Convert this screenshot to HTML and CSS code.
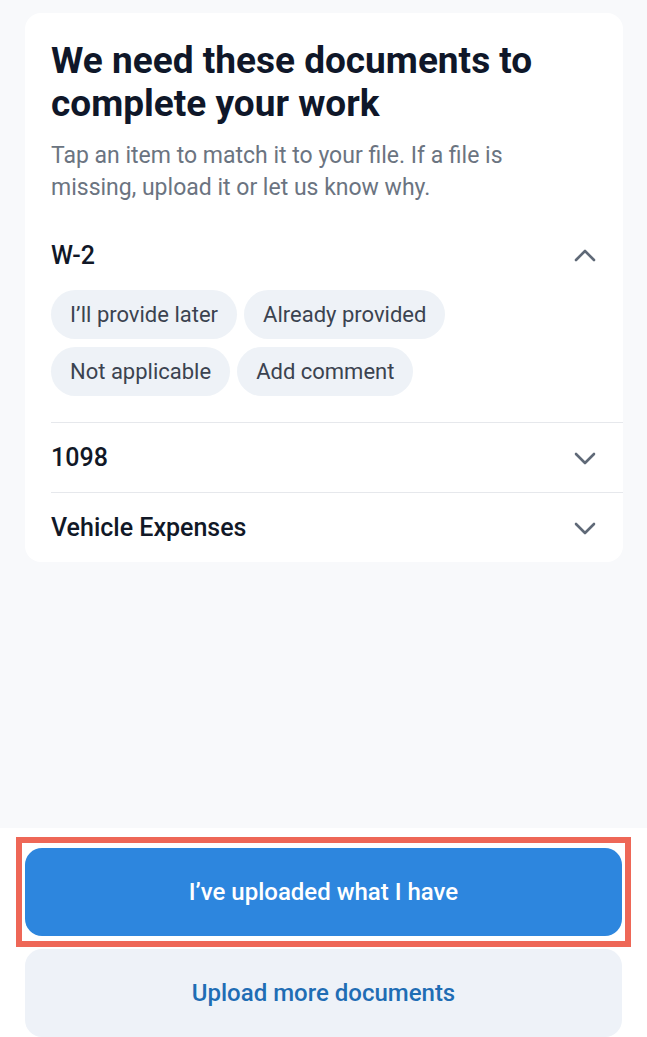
FILE: index.html
```html
<!DOCTYPE html>
<html lang="en">
<head>
    <meta charset="UTF-8">
    <meta name="viewport" content="width=device-width, initial-scale=1.0">
    <title>Documents needed</title>
    <link rel="stylesheet" href="styles.css">
</head>
<body>
    <div class="screen">
        <main class="content">
            <section class="card">
                <div class="intro">
                    <h1>We need these documents to complete your work</h1>
                    <p>Tap an item to match it to your file. If a file is missing, upload it or let us know why.</p>
                </div>

                <div class="doc doc-first">
                    <div class="doc-head">
                        <span class="doc-title">W-2</span>
                        <svg class="chevron" viewBox="0 0 22 22" width="22" height="22"><path d="M2 15l9-9 9 9"/></svg>
                    </div>
                    <div class="chips">
                        <span class="chip">I’ll provide later</span>
                        <span class="chip">Already provided</span>
                        <span class="chip">Not applicable</span>
                        <span class="chip">Add comment</span>
                    </div>
                </div>

                <div class="doc">
                    <div class="doc-head">
                        <span class="doc-title">1098</span>
                        <svg class="chevron" viewBox="0 0 22 22" width="22" height="22"><path d="M2 7l9 9 9-9"/></svg>
                    </div>
                </div>

                <div class="doc">
                    <div class="doc-head">
                        <span class="doc-title">Vehicle Expenses</span>
                        <svg class="chevron" viewBox="0 0 22 22" width="22" height="22"><path d="M2 7l9 9 9-9"/></svg>
                    </div>
                </div>
            </section>
        </main>

        <footer class="actions">
            <div class="highlight">
                <button class="btn btn-primary">I’ve uploaded what I have</button>
            </div>
            <button class="btn btn-secondary">Upload more documents</button>
        </footer>
    </div>
</body>
</html>
```

FILE: styles.css
```css
body {
    margin: 0;
    background: #f8f9fb;
    font-family: Roboto, "Liberation Sans", Arial, sans-serif;
    color: #111827;
}
.screen {
    display: flex;
    flex-direction: column;
    min-height: 100vh;
}
.content {
    flex: 1;
    padding: 13px 24px 0 25px;
}
.card {
    background: #fff;
    border-radius: 16px;
    padding-left: 26px;
}
.intro {
    padding: 26px 30px 0 0;
}
.intro h1 {
    margin: 0;
    font-size: 37px;
    line-height: 43px;
    font-weight: 700;
    color: #0f1729;
}
.intro p {
    margin: 15px 0 0;
    font-size: 23px;
    line-height: 32px;
    color: #6b7481;
}
.doc + .doc {
    border-top: 1px solid #e6e8ec;
}
.doc-first {
    margin-top: 17px;
}
.doc-head {
    display: flex;
    align-items: center;
    justify-content: space-between;
    height: 69px;
    padding-right: 27px;
}
.doc-title {
    font-size: 25px;
    font-weight: 500;
    color: #111827;
}
.chevron {
    fill: none;
    stroke: #5f6977;
    stroke-width: 2.6;
    stroke-linecap: round;
    stroke-linejoin: round;
}
.chips {
    display: flex;
    flex-wrap: wrap;
    gap: 8px 7px;
    padding: 0 150px 26px 0;
}
.chip {
    display: inline-flex;
    align-items: center;
    height: 49px;
    padding: 0 19px;
    border-radius: 25px;
    background: #eef2f7;
    font-size: 22px;
    color: #3b4350;
}
.actions {
    background: #fff;
    display: flex;
    flex-direction: column;
    gap: 13px;
    padding: 20px 25px 0 25px;
}
.btn {
    width: 100%;
    border: none;
    border-radius: 17px;
    font-family: inherit;
    font-size: 24px;
    font-weight: 500;
    height: 88px;
}
.btn-primary {
    background: #2d86de;
    color: #fff;
}
.btn-secondary {
    background: #eef2f8;
    color: #1f6db4;
}
.highlight {
    position: relative;
    display: flex;
}
.highlight::after {
    content: "";
    position: absolute;
    top: -11px;
    left: -9px;
    right: -9px;
    bottom: -11px;
    border: 6px solid #ee6757;
    pointer-events: none;
}
```
